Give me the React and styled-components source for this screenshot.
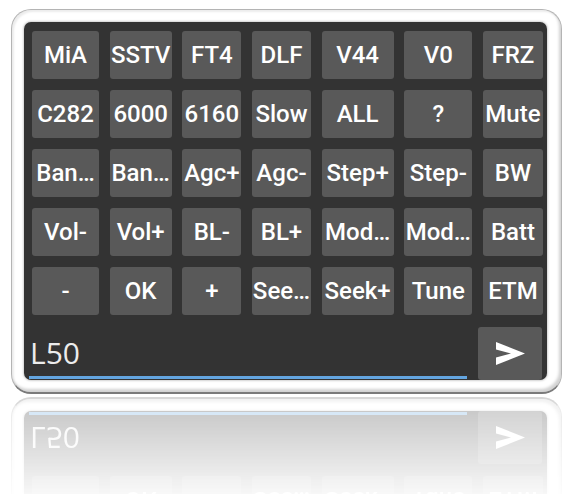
import React from "react";
import styled, { createGlobalStyle } from "styled-components";

// Remote keypad: a grid of command keys plus a command line with a send key,
// shown on a glossy card with a mirrored copy fading out underneath.

const GlobalStyle = createGlobalStyle`
  html, body {
    margin: 0;
    padding: 0;
    background: #ffffff;
    overflow: hidden;
  }
`;

const Page = styled.div`
  padding: 9px 9px 0 11px;
`;

const Frame = styled.div`
  width: 551px;
  height: 385px;
  box-sizing: border-box;
  padding: 12px 14px 12px 12px;
  background: #ffffff;
  border: 1px solid #b4b4b4;
  border-bottom: 2px solid #7a7a7a;
  border-radius: 20px;
  box-shadow: inset -2px -3px 3px rgba(0, 0, 0, 0.18), inset 2px 2px 2px rgba(0, 0, 0, 0.08);
`;

const ReflectionClip = styled.div`
  margin-top: 3px;
  height: 100px;
  overflow: hidden;
  -webkit-mask-image: linear-gradient(to bottom, rgba(0, 0, 0, 0.3), rgba(0, 0, 0, 0.03) 100%);
  mask-image: linear-gradient(to bottom, rgba(0, 0, 0, 0.3), rgba(0, 0, 0, 0.03) 100%);
`;

const Mirrored = styled.div`
  transform: scaleY(-1);
  filter: blur(0.6px);
`;

const Panel = styled.div`
  height: 100%;
  box-sizing: border-box;
  padding: 9px 5px 0 8px;
  background: #333333;
  border-radius: 7px;
  box-shadow: 0 0 2px 1px rgba(0, 0, 0, 0.18);
  display: flex;
  flex-direction: column;
`;

const Keys = styled.div`
  display: grid;
  grid-template-columns: 67px 62px 59px 59px 72px 68px 60px;
  grid-auto-rows: 48px;
  column-gap: 10.67px;
  row-gap: 11px;
`;

const Key = styled.button`
  margin: 0;
  padding: 0;
  border: none;
  border-radius: 3px;
  background: #595959;
  color: #ffffff;
  font-family: Roboto, "Liberation Sans", sans-serif;
  font-weight: 500;
  font-size: 24px;
  white-space: nowrap;
  overflow: hidden;
  display: flex;
  align-items: center;
  justify-content: center;
`;

const CommandRow = styled.div`
  margin: 12px 0 0 -3px;
  height: 53px;
  display: flex;
  gap: 11px;
`;

const Command = styled.div`
  flex: 1;
  box-sizing: border-box;
  height: 52px;
  padding: 0 0 8px 1px;
  border-bottom: 3px solid #63a5e0;
  display: flex;
  align-items: flex-end;
  color: #ececec;
  font-family: "Open Sans", "Noto Sans", sans-serif;
  font-size: 30px;
  line-height: 1;
`;

const SendKey = styled.button`
  width: 64px;
  height: 53px;
  margin: 0;
  padding: 0;
  border: none;
  border-radius: 3px;
  background: #595959;
  display: flex;
  align-items: center;
  justify-content: center;
`;

const keys = [
  "MiA", "SSTV", "FT4", "DLF", "V44", "V0", "FRZ",
  "C282", "6000", "6160", "Slow", "ALL", "?", "Mute",
  "Ban…", "Ban…", "Agc+", "Agc-", "Step+", "Step-", "BW",
  "Vol-", "Vol+", "BL-", "BL+", "Mod…", "Mod…", "Batt",
  "-", "OK", "+", "See…", "Seek+", "Tune", "ETM",
];

const SendIcon = () => (
  <svg width="29" height="23" viewBox="0 0 29 23">
    <polygon points="0,0 29,11.5 0,23 0,15.5 15,11.5 0,7.5" fill="#ffffff" />
  </svg>
);

const Keypad = () => (
  <Frame>
    <Panel>
      <Keys>
        {keys.map((label, i) => (
          <Key key={i}>{label}</Key>
        ))}
      </Keys>
      <CommandRow>
        <Command>L50</Command>
        <SendKey>
          <SendIcon />
        </SendKey>
      </CommandRow>
    </Panel>
  </Frame>
);

export default function App() {
  return (
    <Page>
      <GlobalStyle />
      <Keypad />
      <ReflectionClip aria-hidden="true">
        <Mirrored>
          <Keypad />
        </Mirrored>
      </ReflectionClip>
    </Page>
  );
}
